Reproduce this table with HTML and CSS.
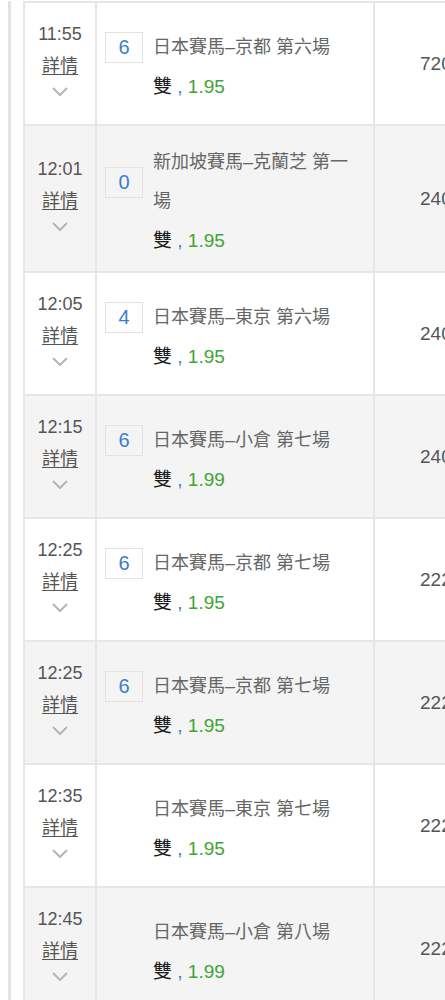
FILE: index.html
```html
<!DOCTYPE html>
<html lang="zh-Hant">
<head>
    <meta charset="UTF-8">
    <meta name="viewport" content="width=device-width, initial-scale=1.0">
    <title>賽事列表</title>
    <link rel="stylesheet" href="styles.css">
</head>
<body>
    <div class="page">
        <div class="frame">
            <div class="list">
                <div class="row">
                    <div class="cell time-cell">
                        <div class="time">11:55</div>
                        <a class="detail">詳情</a>
                        <svg class="chev" width="16" height="9" viewBox="0 0 16 9"><polyline points="1,1 8,8 15,1"/></svg>
                    </div>
                    <div class="cell race-cell">
                        <div class="head"><span class="num">6</span><span class="name">日本賽馬–京都 第六場</span></div>
                        <div class="odds"><span class="pick">雙</span> <span class="comma">,</span> <span class="price">1.95</span></div>
                    </div>
                    <div class="cell amount">7200</div>
                </div>

                <div class="row alt">
                    <div class="cell time-cell">
                        <div class="time">12:01</div>
                        <a class="detail">詳情</a>
                        <svg class="chev" width="16" height="9" viewBox="0 0 16 9"><polyline points="1,1 8,8 15,1"/></svg>
                    </div>
                    <div class="cell race-cell">
                        <div class="head"><span class="num">0</span><span class="name">新加坡賽馬–克蘭芝 第一場</span></div>
                        <div class="odds"><span class="pick">雙</span> <span class="comma">,</span> <span class="price">1.95</span></div>
                    </div>
                    <div class="cell amount">2400</div>
                </div>

                <div class="row">
                    <div class="cell time-cell">
                        <div class="time">12:05</div>
                        <a class="detail">詳情</a>
                        <svg class="chev" width="16" height="9" viewBox="0 0 16 9"><polyline points="1,1 8,8 15,1"/></svg>
                    </div>
                    <div class="cell race-cell">
                        <div class="head"><span class="num">4</span><span class="name">日本賽馬–東京 第六場</span></div>
                        <div class="odds"><span class="pick">雙</span> <span class="comma">,</span> <span class="price">1.95</span></div>
                    </div>
                    <div class="cell amount">2400</div>
                </div>

                <div class="row alt">
                    <div class="cell time-cell">
                        <div class="time">12:15</div>
                        <a class="detail">詳情</a>
                        <svg class="chev" width="16" height="9" viewBox="0 0 16 9"><polyline points="1,1 8,8 15,1"/></svg>
                    </div>
                    <div class="cell race-cell">
                        <div class="head"><span class="num">6</span><span class="name">日本賽馬–小倉 第七場</span></div>
                        <div class="odds"><span class="pick">雙</span> <span class="comma">,</span> <span class="price">1.99</span></div>
                    </div>
                    <div class="cell amount">2400</div>
                </div>

                <div class="row">
                    <div class="cell time-cell">
                        <div class="time">12:25</div>
                        <a class="detail">詳情</a>
                        <svg class="chev" width="16" height="9" viewBox="0 0 16 9"><polyline points="1,1 8,8 15,1"/></svg>
                    </div>
                    <div class="cell race-cell">
                        <div class="head"><span class="num">6</span><span class="name">日本賽馬–京都 第七場</span></div>
                        <div class="odds"><span class="pick">雙</span> <span class="comma">,</span> <span class="price">1.95</span></div>
                    </div>
                    <div class="cell amount">2220</div>
                </div>

                <div class="row alt">
                    <div class="cell time-cell">
                        <div class="time">12:25</div>
                        <a class="detail">詳情</a>
                        <svg class="chev" width="16" height="9" viewBox="0 0 16 9"><polyline points="1,1 8,8 15,1"/></svg>
                    </div>
                    <div class="cell race-cell">
                        <div class="head"><span class="num">6</span><span class="name">日本賽馬–京都 第七場</span></div>
                        <div class="odds"><span class="pick">雙</span> <span class="comma">,</span> <span class="price">1.95</span></div>
                    </div>
                    <div class="cell amount">2220</div>
                </div>

                <div class="row">
                    <div class="cell time-cell">
                        <div class="time">12:35</div>
                        <a class="detail">詳情</a>
                        <svg class="chev" width="16" height="9" viewBox="0 0 16 9"><polyline points="1,1 8,8 15,1"/></svg>
                    </div>
                    <div class="cell race-cell">
                        <div class="head"><span class="num empty"></span><span class="name">日本賽馬–東京 第七場</span></div>
                        <div class="odds"><span class="pick">雙</span> <span class="comma">,</span> <span class="price">1.95</span></div>
                    </div>
                    <div class="cell amount">2220</div>
                </div>

                <div class="row alt">
                    <div class="cell time-cell">
                        <div class="time">12:45</div>
                        <a class="detail">詳情</a>
                        <svg class="chev" width="16" height="9" viewBox="0 0 16 9"><polyline points="1,1 8,8 15,1"/></svg>
                    </div>
                    <div class="cell race-cell">
                        <div class="head"><span class="num empty"></span><span class="name">日本賽馬–小倉 第八場</span></div>
                        <div class="odds"><span class="pick">雙</span> <span class="comma">,</span> <span class="price">1.99</span></div>
                    </div>
                    <div class="cell amount">2220</div>
                </div>
            </div>
        </div>
    </div>
</body>
</html>
```
FILE: styles.css
```css
body {
    margin: 0;
    font-family: "Liberation Sans", "Noto Sans CJK TC", sans-serif;
    background-color: #fff;
    overflow: hidden;
}
.page {
    padding-left: 8px;
}
.frame {
    border-left: 3px solid #e3e3e3;
    padding-left: 12px;
    min-height: 1000px;
}
.list {
    width: 640px;
    margin-top: 1px;
    border-top: 2px solid #e6e6e6;
    border-left: 2px solid #e6e6e6;
}
.row {
    display: grid;
    grid-template-columns: 72px 278px 1fr;
    min-height: 121px;
    border-bottom: 2px solid #e6e6e6;
    background-color: #fff;
}
.row.alt {
    background-color: #f4f4f4;
}
.cell {
    box-sizing: border-box;
    border-right: 2px solid #e6e6e6;
}
.time-cell {
    display: flex;
    flex-direction: column;
    align-items: center;
    justify-content: center;
    padding-bottom: 14px;
}
.time {
    font-size: 18px;
    line-height: 32px;
    color: #555;
}
.detail {
    font-size: 18px;
    line-height: 32px;
    color: #555;
    text-decoration: underline;
    text-underline-offset: 2px;
}
.chev {
    margin-top: 5px;
}
.chev polyline {
    fill: none;
    stroke: #b5b5b5;
    stroke-width: 2;
}
.race-cell {
    display: flex;
    flex-direction: column;
    justify-content: center;
    padding: 17px 10px 11px 8px;
}
.head {
    display: flex;
    align-items: center;
}
.num {
    flex-shrink: 0;
    box-sizing: border-box;
    width: 38px;
    height: 31px;
    margin-right: 10px;
    border: 1px solid #e2e2e2;
    display: flex;
    align-items: center;
    justify-content: center;
    font-size: 20px;
    color: #3a7dd0;
}
.num.empty {
    border-color: transparent;
}
.name {
    font-size: 18px;
    line-height: 39px;
    color: #666;
}
.odds {
    padding-left: 48px;
    font-size: 19px;
    line-height: 39px;
}
.pick {
    font-size: 19px;
    color: #1a1a1a;
}
.comma {
    color: #3a7dd0;
}
.price {
    color: #3fa535;
}
.amount {
    display: flex;
    align-items: center;
    padding-left: 45px;
    font-size: 19px;
    color: #555;
    border-right: none;
}
```
